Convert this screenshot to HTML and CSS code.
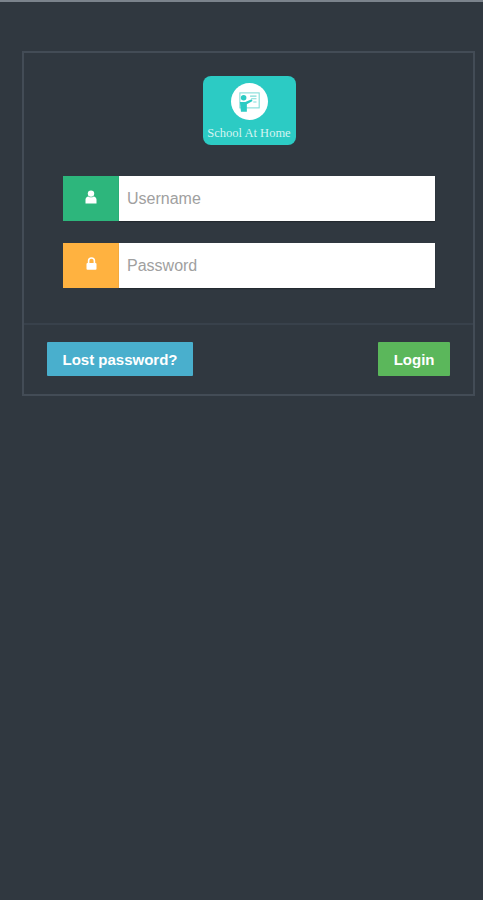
FILE: index.html
```html
<!DOCTYPE html>
<html lang="en">
  <head>
    <meta charset="UTF-8" />
    <meta name="viewport" content="width=device-width, initial-scale=1.0" />
    <title>School At Home - Login</title>
    <link rel="stylesheet" href="styles.css">
  </head>
  <body>
    <div class="login-box">
      <form class="login-body">
        <div class="logo">
          <div class="logo-circle">
            <svg width="30" height="30" viewBox="0 0 28 28" fill="none">
              <rect x="5.5" y="5.5" width="18" height="14" stroke="#7fdcd7" stroke-width="1" />
              <circle cx="9" cy="10" r="2.6" fill="#2ccbc4" />
              <path d="M5.5 14h5l6-2.5.8 1.6-5.3 3V23H6.5z" fill="#2ccbc4" />
              <path d="M15 8.5h6M16 11h5M18 14h3" stroke="#7fdcd7" stroke-width="1" />
            </svg>
          </div>
          <div class="logo-text">School At Home</div>
        </div>
        <div class="input-group">
          <span class="input-icon icon-user">
            <svg width="12" height="14" viewBox="0 0 12 14">
              <circle cx="6" cy="3.6" r="3.2" fill="#fff" />
              <path d="M0.5 13.4V9.6C0.5 7.8 1.8 6.6 3.4 6.4 4.2 7 5 7.3 6 7.3S7.8 7 8.6 6.4C10.2 6.6 11.5 7.8 11.5 9.6V13.4Z" fill="#fff" />
            </svg>
          </span>
          <input type="text" placeholder="Username" />
        </div>
        <div class="input-group">
          <span class="input-icon icon-lock">
            <svg width="11" height="13" viewBox="0 0 11 13">
              <path d="M2.6 6.5V3.8C2.6 2.1 3.9 1 5.5 1S8.4 2.1 8.4 3.8V6.5" fill="none" stroke="#fff" stroke-width="1.6" />
              <rect x="0.5" y="6" width="10" height="6.8" rx="1" fill="#fff" />
            </svg>
          </span>
          <input type="password" placeholder="Password" />
        </div>
      </form>
      <div class="login-footer">
        <button type="button" class="btn btn-info">Lost password?</button>
        <button type="submit" class="btn btn-success">Login</button>
      </div>
    </div>
  </body>
</html>
```

FILE: styles.css
```css
html,
body {
  height: 100%;
}

body {
  margin: 0;
  background-color: #303840;
  border-top: 2px solid #7b838c;
  box-sizing: border-box;
  font-family: "Liberation Sans", Arial, sans-serif;
  padding: 49px 8px 0 22px;
}

.login-box {
  border: 2px solid #434c56;
}

.login-body {
  padding: 23px 38px 35px 39px;
  border-bottom: 2px solid #38414b;
}

.logo {
  width: 93px;
  height: 69px;
  margin: 0 auto 31px;
  background-color: #2ccbc4;
  border-radius: 8px;
  text-align: center;
  overflow: hidden;
}

.logo-circle {
  width: 37px;
  height: 37px;
  margin: 7px auto 0;
  background-color: #fff;
  border-radius: 50%;
  display: flex;
  align-items: center;
  justify-content: center;
}

.logo-text {
  margin-top: 5px;
  color: #d5f4f2;
  font-family: "Liberation Serif", serif;
  font-size: 12.5px;
  line-height: 16px;
  white-space: nowrap;
}

.input-group {
  display: flex;
  height: 45px;
  margin-bottom: 22px;
}

.input-group:last-child {
  margin-bottom: 0;
}

.input-icon {
  width: 56px;
  flex: none;
  display: flex;
  align-items: center;
  justify-content: center;
  padding-bottom: 4px;
  box-sizing: border-box;
}

.icon-user {
  background-color: #2db67c;
}

.icon-lock {
  background-color: #ffb240;
}

.input-group input {
  flex: 1;
  min-width: 0;
  border: none;
  border-radius: 0;
  padding: 0 8px;
  background-color: #fff;
  box-shadow: 0 1px 1px rgba(0, 0, 0, 0.25);
  font-family: "Liberation Sans", Arial, sans-serif;
  font-size: 16px;
}

.input-group input::placeholder {
  color: #a0a0a0;
  opacity: 1;
}

.login-footer {
  display: flex;
  justify-content: space-between;
  align-items: flex-start;
  padding: 17px 23px 18px 23px;
}

.btn {
  height: 34px;
  border: none;
  border-radius: 1px;
  padding: 0 15.5px;
  color: #fff;
  font-family: "Liberation Sans", Arial, sans-serif;
  font-size: 15px;
  font-weight: bold;
  cursor: pointer;
}

.btn-info {
  background-color: #49afcd;
}

.btn-success {
  background-color: #5bb75b;
}
```
